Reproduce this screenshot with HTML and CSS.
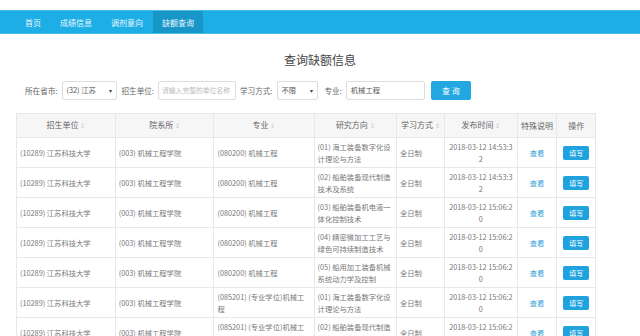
FILE: index.html
```html
<!DOCTYPE html>
<html lang="zh-CN">
<head>
    <meta charset="UTF-8">
    <title>查询缺额信息</title>
    <link rel="stylesheet" href="styles.css">
</head>
<body>
    <div class="nav">
        <a class="nav-item" href="#">首页</a>
        <a class="nav-item" href="#">成绩信息</a>
        <a class="nav-item" href="#">调剂意向</a>
        <a class="nav-item active" href="#">缺额查询</a>
    </div>
    <h1 class="title">查询缺额信息</h1>
    <div class="filters">
        <label>所在省市:</label>
        <div class="select sel-prov">(32) 江苏<span class="caret">▾</span></div>
        <label>招生单位:</label>
        <div class="input inp-unit placeholder">请输入完整的单位名称</div>
        <label>学习方式:</label>
        <div class="select sel-mode">不限<span class="caret">▾</span></div>
        <label>专业:</label>
        <div class="input inp-major">机械工程</div>
        <button class="btn-search">查 询</button>
    </div>
    <table class="grid">
        <thead>
            <tr>
                <th class="c1">招生单位 <i>⇕</i></th>
                <th class="c2">院系所 <i>⇕</i></th>
                <th class="c3">专业 <i>⇕</i></th>
                <th class="c4">研究方向 <i>⇕</i></th>
                <th class="c5">学习方式 <i>⇕</i></th>
                <th class="c6">发布时间 <i>⇕</i></th>
                <th class="c7">特殊说明</th>
                <th class="c8">操作</th>
            </tr>
        </thead>
        <tbody id="rows"></tbody>
    </table>
    <script>
        const rows = [
            ['(080200) 机械工程', '(01) 海工装备数字化设计理论与方法', '2018-03-12 14:53:32'],
            ['(080200) 机械工程', '(02) 船舶装备现代制造技术及系统', '2018-03-12 14:53:32'],
            ['(080200) 机械工程', '(03) 船舶装备机电液一体化控制技术', '2018-03-12 15:06:20'],
            ['(080200) 机械工程', '(04) 精密微加工工艺与绿色可持续制造技术', '2018-03-12 15:06:20'],
            ['(080200) 机械工程', '(05) 船用加工装备机械系统动力学及控制', '2018-03-12 15:06:20'],
            ['(085201) (专业学位)机械工程', '(01) 海工装备数字化设计理论与方法', '2018-03-12 15:06:20'],
            ['(085201) (专业学位)机械工程', '(02) 船舶装备现代制造技术及系统', '2018-03-12 15:06:20']
        ];
        let html = '';
        rows.forEach(function(r) {
            html += '<tr>' +
                '<td>(10289) 江苏科技大学</td>' +
                '<td>(003) 机械工程学院</td>' +
                '<td>' + r[0] + '</td>' +
                '<td>' + r[1] + '</td>' +
                '<td>全日制</td>' +
                '<td class="center">' + r[2] + '</td>' +
                '<td class="center"><a class="link" href="#">查看</a></td>' +
                '<td class="center"><button class="btn-fill">填写</button></td>' +
                '</tr>';
        });
        document.getElementById('rows').innerHTML = html;
    </script>
</body>
</html>
```

FILE: styles.css
```css
html, body {
    height: 336px;
    overflow: hidden;
}
body {
    margin: 0;
    font-family: "Noto Sans CJK SC", "Noto Sans", sans-serif;
    font-size: 7.3px;
    color: #777;
    background: #fff;
}
.nav {
    margin-top: 10px;
    height: 24px;
    background-color: #1eaee6;
    border-top: 1px solid #47bde9;
    border-bottom: 1px solid #47bde9;
    display: flex;
    padding-left: 16px;
    box-sizing: border-box;
}
.nav-item {
    display: flex;
    align-items: center;
    padding: 0 9px;
    margin-right: 1px;
    color: #eaf7fd;
    text-decoration: none;
    font-size: 8px;
}
.nav-item.active {
    background-color: #1896c8;
    padding: 0 9px;
}
.title {
    margin: 18px 0 0;
    font-weight: normal;
    font-size: 12px;
    color: #444;
    text-align: center;
    line-height: 16px;
}
.filters {
    display: flex;
    align-items: center;
    margin: 12px 0 0 25px;
    height: 20px;
}
.filters label {
    color: #666;
    font-size: 7.6px;
    margin-right: 4px;
}
.select, .input {
    height: 19px;
    border: 1px solid #ddd;
    border-radius: 2px;
    box-sizing: border-box;
    display: flex;
    align-items: center;
    padding: 0 4px;
    color: #555;
    margin-right: 5px;
    white-space: nowrap;
    overflow: hidden;
}
.select {
    justify-content: space-between;
}
.caret {
    font-size: 6px;
    color: #444;
}
.sel-prov { width: 55px; }
.sel-mode { width: 41px; margin-right: 7px; }
.inp-unit { width: 78px; margin-right: 4px; padding: 0 3px; }
.inp-major { width: 79px; margin-right: 6px; }
.placeholder {
    color: #bbb;
    font-size: 6.8px;
}
.btn-search {
    width: 40px;
    height: 19px;
    border: none;
    border-radius: 2px;
    background-color: #22a7e1;
    color: #fff;
    font-family: inherit;
    font-size: 8px;
}
.grid {
    margin: 13px 0 0 16px;
    border-collapse: collapse;
    table-layout: fixed;
    width: 580px;
}
.grid th, .grid td {
    border: 1px solid #e8e8e8;
    padding: 0 3px;
    line-height: 12px;
    word-break: break-all;
}
.grid th {
    height: 23px;
    background-color: #f6f6f6;
    font-weight: normal;
    color: #666;
    font-size: 8px;
    text-align: center;
    padding: 0 1px;
    white-space: nowrap;
    overflow: hidden;
}
.grid th i {
    font-style: normal;
    color: #ccc;
    font-size: 6px;
}
.grid td {
    height: 29px;
}
.grid td.center {
    text-align: center;
}
.c1 { width: 17.24%; }
.c2 { width: 17.24%; }
.c3 { width: 17.5%; }
.c4 { width: 14.3%; }
.c5 { width: 8.1%; }
.c6 { width: 12.6%; }
.c7 { width: 6.6%; }
.c8 { width: 6.42%; }
.link {
    color: #3aa3dc;
    text-decoration: none;
}
.btn-fill {
    width: 26px;
    height: 14px;
    border: none;
    border-radius: 2px;
    background-color: #1fa3df;
    color: #fff;
    font-family: inherit;
    font-size: 7px;
    padding: 0;
}
```
